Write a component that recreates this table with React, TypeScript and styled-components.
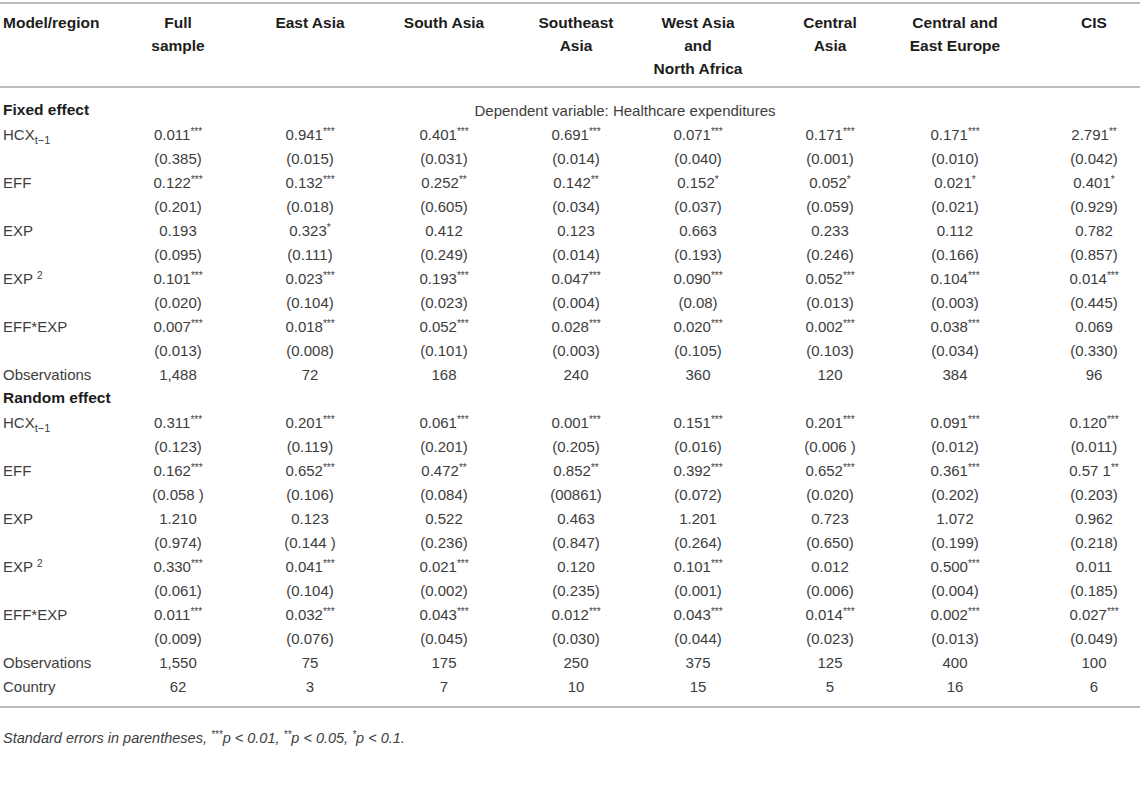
import styled, {createGlobalStyle} from 'styled-components';

const COLS = '110px 136px 128px 140px 124px 120px 144px 106px 172px';

const GlobalStyle = createGlobalStyle`
    body {
        margin: 0;
        background: #fff;
        font-family: "Liberation Sans", Arial, sans-serif;
    }
`;

const Page = styled.div`
    width: 1140px;
    overflow: hidden;
    padding-top: 2px;
`;

const Table = styled.div`
    width: 1180px;
    font-size: 15px;
    color: #3d3d3d;
`;

const HeadRow = styled.div`
    display: grid;
    grid-template-columns: ${COLS};
    border-top: 2px solid #bcbcbc;
    border-bottom: 2px solid #bcbcbc;
    padding: 7px 0 6px;
`;

const HeadCell = styled.div<{$left?: boolean}>`
    font-weight: bold;
    font-size: 15.5px;
    color: #1c1c1c;
    line-height: 23px;
    text-align: ${props => props.$left ? 'left' : 'center'};
    padding-left: ${props => props.$left ? '3px' : '0'};
`;

const Body = styled.div`
    padding: 10px 0 8px;
    border-bottom: 2px solid #bcbcbc;
`;

const Row = styled.div`
    display: grid;
    grid-template-columns: ${COLS};
    height: 24px;
    align-items: center;
`;

const Label = styled.div<{$section?: boolean}>`
    padding-left: 3px;
    white-space: nowrap;
    font-weight: ${props => props.$section ? 'bold' : 'normal'};
    font-size: ${props => props.$section ? '15.5px' : '15px'};
    color: ${props => props.$section ? '#1c1c1c' : 'inherit'};
`;

const Cell = styled.div`
    text-align: center;
    white-space: pre;
`;

const Span = styled.div`
    grid-column: 2 / span 8;
    text-align: center;
    padding-right: 40px;
`;

const Stars = styled.sup`
    font-size: 10px;
    line-height: 0;
    vertical-align: 5px;
`;

const Sub = styled.sub`
    font-size: 11px;
    line-height: 0;
    vertical-align: -4px;
`;

const Note = styled.p`
    margin: 22px 0 0;
    padding-left: 3px;
    font-style: italic;
    font-size: 14.5px;
    color: #3d3d3d;
`;

const NoteStars = styled.sup`
    font-size: 10px;
    line-height: 0;
    vertical-align: 5px;
`;

const headers = [
    ['Full', 'sample'],
    ['East Asia'],
    ['South Asia'],
    ['Southeast', 'Asia'],
    ['West Asia', 'and', 'North Africa'],
    ['Central', 'Asia'],
    ['Central and', 'East Europe'],
    ['CIS'],
];

type Line = {label: string; values: string[]};

const fixed: Line[] = [
    {label: 'HCX', values: ['0.011***', '0.941***', '0.401***', '0.691***', '0.071***', '0.171***', '0.171***', '2.791**']},
    {label: '', values: ['(0.385)', '(0.015)', '(0.031)', '(0.014)', '(0.040)', '(0.001)', '(0.010)', '(0.042)']},
    {label: 'EFF', values: ['0.122***', '0.132***', '0.252**', '0.142**', '0.152*', '0.052*', '0.021*', '0.401*']},
    {label: '', values: ['(0.201)', '(0.018)', '(0.605)', '(0.034)', '(0.037)', '(0.059)', '(0.021)', '(0.929)']},
    {label: 'EXP', values: ['0.193', '0.323*', '0.412', '0.123', '0.663', '0.233', '0.112', '0.782']},
    {label: '', values: ['(0.095)', '(0.111)', '(0.249)', '(0.014)', '(0.193)', '(0.246)', '(0.166)', '(0.857)']},
    {label: 'EXP2', values: ['0.101***', '0.023***', '0.193***', '0.047***', '0.090***', '0.052***', '0.104***', '0.014***']},
    {label: '', values: ['(0.020)', '(0.104)', '(0.023)', '(0.004)', '(0.08)', '(0.013)', '(0.003)', '(0.445)']},
    {label: 'EFF*EXP', values: ['0.007***', '0.018***', '0.052***', '0.028***', '0.020***', '0.002***', '0.038***', '0.069']},
    {label: '', values: ['(0.013)', '(0.008)', '(0.101)', '(0.003)', '(0.105)', '(0.103)', '(0.034)', '(0.330)']},
    {label: 'Observations', values: ['1,488', '72', '168', '240', '360', '120', '384', '96']},
];

const random: Line[] = [
    {label: 'HCX', values: ['0.311***', '0.201***', '0.061***', '0.001***', '0.151***', '0.201***', '0.091***', '0.120***']},
    {label: '', values: ['(0.123)', '(0.119)', '(0.201)', '(0.205)', '(0.016)', '(0.006 )', '(0.012)', '(0.011)']},
    {label: 'EFF', values: ['0.162***', '0.652***', '0.472**', '0.852**', '0.392***', '0.652***', '0.361***', '0.57 1**']},
    {label: '', values: ['(0.058 )', '(0.106)', '(0.084)', '(00861)', '(0.072)', '(0.020)', '(0.202)', '(0.203)']},
    {label: 'EXP', values: ['1.210', '0.123', '0.522', '0.463', '1.201', '0.723', '1.072', '0.962']},
    {label: '', values: ['(0.974)', '(0.144 )', '(0.236)', '(0.847)', '(0.264)', '(0.650)', '(0.199)', '(0.218)']},
    {label: 'EXP2', values: ['0.330***', '0.041***', '0.021***', '0.120', '0.101***', '0.012', '0.500***', '0.011']},
    {label: '', values: ['(0.061)', '(0.104)', '(0.002)', '(0.235)', '(0.001)', '(0.006)', '(0.004)', '(0.185)']},
    {label: 'EFF*EXP', values: ['0.011***', '0.032***', '0.043***', '0.012***', '0.043***', '0.014***', '0.002***', '0.027***']},
    {label: '', values: ['(0.009)', '(0.076)', '(0.045)', '(0.030)', '(0.044)', '(0.023)', '(0.013)', '(0.049)']},
    {label: 'Observations', values: ['1,550', '75', '175', '250', '375', '125', '400', '100']},
    {label: 'Country', values: ['62', '3', '7', '10', '15', '5', '16', '6']},
];

function renderLabel(label: string) {
    if (label === 'HCX') return <>HCX<Sub>t−1</Sub></>;
    if (label === 'EXP2') return <>EXP <Stars>2</Stars></>;
    return label;
}

function Value({v}: {v: string}) {
    const m = v.match(/^(.*?)(\*+)$/);
    if (!m) return <Cell>{v}</Cell>;
    return <Cell>{m[1]}<Stars>{m[2]}</Stars></Cell>;
}

function Lines({rows}: {rows: Line[]}) {
    return (
        <>
            {rows.map((r, i) => (
                <Row key={i}>
                    <Label>{renderLabel(r.label)}</Label>
                    {r.values.map((v, j) => <Value key={j} v={v} />)}
                </Row>
            ))}
        </>
    );
}

function App() {
    return (
        <Page>
            <GlobalStyle />
            <Table>
                <HeadRow>
                    <HeadCell $left>Model/region</HeadCell>
                    {headers.map((h, i) => (
                        <HeadCell key={i}>
                            {h.map((line, j) => <div key={j}>{line}</div>)}
                        </HeadCell>
                    ))}
                </HeadRow>
                <Body>
                    <Row>
                        <Label $section>Fixed effect</Label>
                        <Span>Dependent variable: Healthcare expenditures</Span>
                    </Row>
                    <Lines rows={fixed} />
                    <Row>
                        <Label $section>Random effect</Label>
                    </Row>
                    <Lines rows={random} />
                </Body>
            </Table>
            <Note>
                Standard errors in parentheses, <NoteStars>***</NoteStars>p &lt; 0.01, <NoteStars>**</NoteStars>p &lt; 0.05, <NoteStars>*</NoteStars>p &lt; 0.1.
            </Note>
        </Page>
    );
}

export default App;
